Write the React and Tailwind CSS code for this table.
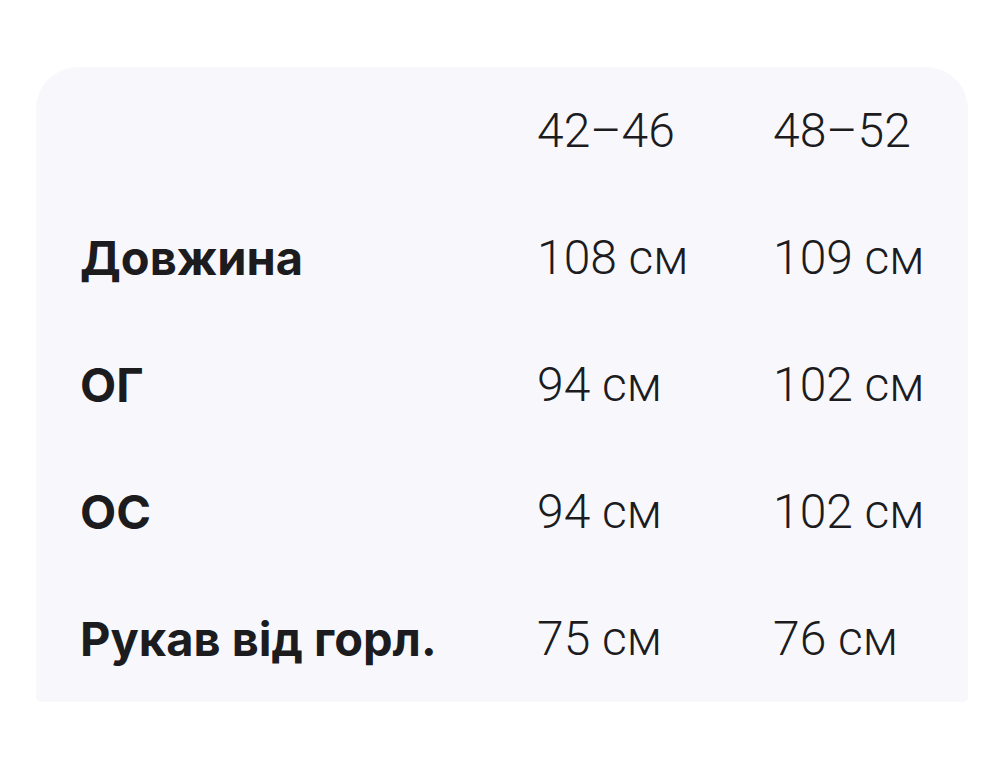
const rows = [
  { label: "Довжина", a: "108 см", b: "109 см" },
  { label: "ОГ", a: "94 см", b: "102 см" },
  { label: "ОС", a: "94 см", b: "102 см" },
  { label: "Рукав від горл.", a: "75 см", b: "76 см" },
];

export default function App() {
  return (
    <div className="w-[995px] h-[776px] bg-white pt-[67px] pl-[36px]">
      <div className="w-[932px] bg-[#f8f8fc] rounded-t-[42px] rounded-b-[5px] grid grid-cols-[501px_236px_1fr] auto-rows-[127px] items-center text-[#1c1c1f]">
        <div />
        <div className="font-['Roboto',sans-serif] font-light text-[48px] leading-none">42–46</div>
        <div className="font-['Roboto',sans-serif] font-light text-[48px] leading-none">48–52</div>
        {rows.map((r) => (
          <div key={r.label} className="contents">
            <div className="pl-[44px] font-['Inter',sans-serif] font-bold text-[47px] leading-none">
              {r.label}
            </div>
            <div className="font-['Roboto',sans-serif] font-light text-[48px] leading-none">{r.a}</div>
            <div className="font-['Roboto',sans-serif] font-light text-[48px] leading-none">{r.b}</div>
          </div>
        ))}
      </div>
    </div>
  );
}
